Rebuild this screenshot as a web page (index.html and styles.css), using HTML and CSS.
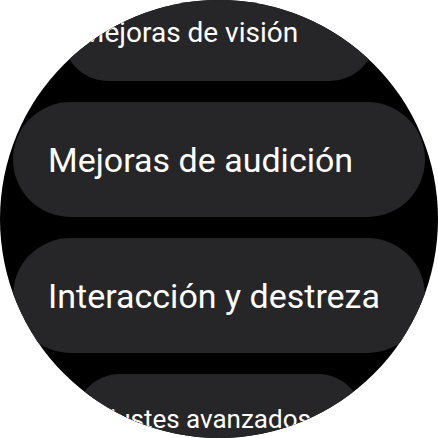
FILE: index.html
```html
<!DOCTYPE html>
<html lang="es">
<head>
<meta charset="utf-8">
<link rel="stylesheet" href="styles.css">
</head>
<body>
<div class="screen">
  <div class="chip chip-edge chip-top"><span class="label">Mejoras de visión</span></div>
  <div class="chip chip-full"><span class="label">Mejoras de audición</span></div>
  <div class="chip chip-full"><span class="label">Interacción y destreza</span></div>
  <div class="chip chip-edge chip-bottom"><span class="label">Ajustes avanzados</span></div>
</div>
</body>
</html>
```
FILE: styles.css
```css
html, body {
  margin: 0;
  padding: 0;
  background: #ffffff;
}
.screen {
  width: 438px;
  height: 438px;
  border-radius: 50%;
  background: #000000;
  overflow: hidden;
  display: flex;
  flex-direction: column;
  align-items: center;
  gap: 21px;
}
.chip {
  flex: none;
  display: flex;
  align-items: center;
  box-sizing: border-box;
  background: #262628;
  color: #ffffff;
  border-radius: 999px;
  font-family: Roboto, "Noto Sans", sans-serif;
  white-space: nowrap;
}
.chip-full {
  width: 412px;
  height: 115px;
  padding-left: 35px;
  font-size: 34px;
}
.chip-edge {
  border-radius: 45px;
}
.chip-top {
  width: 312px;
  height: 97px;
  margin-top: -16px;
  padding-left: 17px;
  font-size: 28px;
}
.chip-bottom {
  width: 288px;
  height: 90px;
  padding-left: 18px;
  font-size: 26px;
}
```
